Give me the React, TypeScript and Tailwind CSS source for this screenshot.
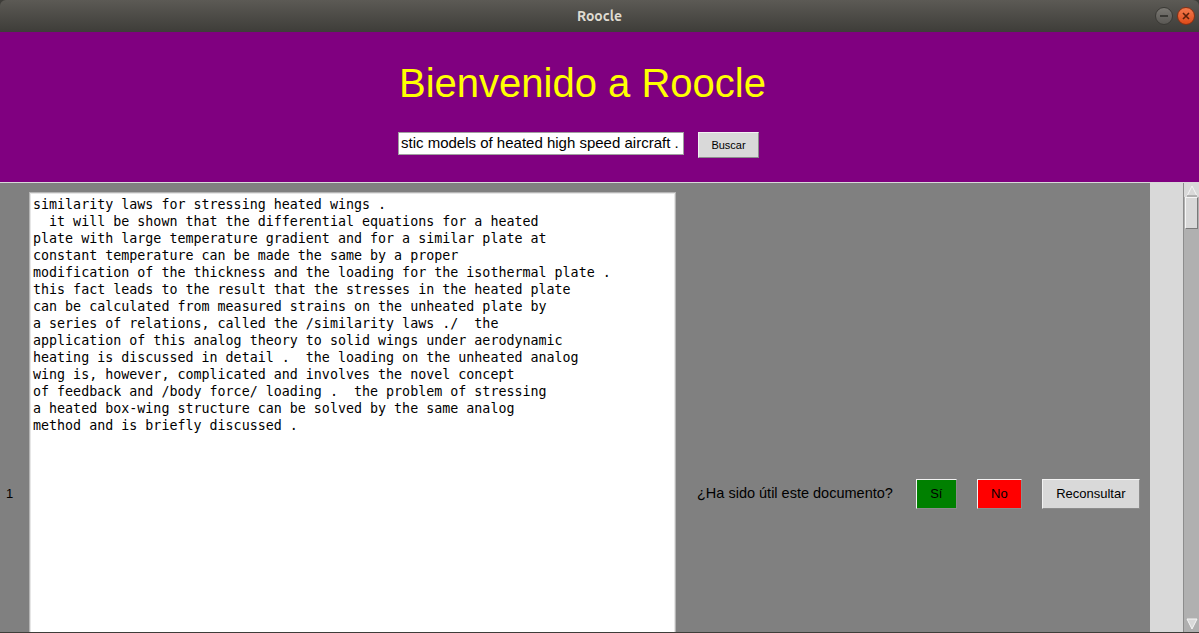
import React from 'react';

const DOC_LINES = [
  'similarity laws for stressing heated wings .',
  '  it will be shown that the differential equations for a heated',
  'plate with large temperature gradient and for a similar plate at',
  'constant temperature can be made the same by a proper',
  'modification of the thickness and the loading for the isothermal plate .',
  'this fact leads to the result that the stresses in the heated plate',
  'can be calculated from measured strains on the unheated plate by',
  'a series of relations, called the /similarity laws ./  the',
  'application of this analog theory to solid wings under aerodynamic',
  'heating is discussed in detail .  the loading on the unheated analog',
  'wing is, however, complicated and involves the novel concept',
  'of feedback and /body force/ loading .  the problem of stressing',
  'a heated box-wing structure can be solved by the same analog',
  'method and is briefly discussed .',
];

const sans = "font-['Liberation_Sans',Arial,sans-serif]";

function TitleBar() {
  return (
    <div className="relative flex h-[32px] items-center justify-center rounded-t-[6px] bg-gradient-to-b from-[#5c5a55] to-[#3e3d39]">
      <span className="mt-[1px] font-['Ubuntu','DejaVu_Sans',sans-serif] text-[14px] font-bold text-[#dfdbd2]">
        Roocle
      </span>
      <div className="absolute right-[4px] top-[7px] flex gap-[4px]">
        <div className="flex h-[18px] w-[18px] items-center justify-center rounded-full border border-[#3a3935] bg-gradient-to-b from-[#7a7873] to-[#5a5854]">
          <div className="h-[2px] w-[8px] bg-[#3a3935]" />
        </div>
        <div className="flex h-[18px] w-[18px] items-center justify-center rounded-full border border-[#8a2f12] bg-gradient-to-b from-[#f37a4c] to-[#df4a16]">
          <svg width="8" height="8" viewBox="0 0 8 8">
            <path d="M1 1 L7 7 M7 1 L1 7" stroke="#5a1f0a" strokeWidth="1.6" />
          </svg>
        </div>
      </div>
    </div>
  );
}

function TkButton({ label, className }: { label: string; className: string }) {
  return (
    <button
      className={`flex items-center justify-center border border-t-[#f2f2f2] border-l-[#f2f2f2] border-b-[#8c8c8c] border-r-[#8c8c8c] ${sans} ${className}`}
    >
      {label}
    </button>
  );
}

function Header() {
  return (
    <div className="flex h-[150px] flex-col items-center bg-[#800080]">
      <h1 className={`mr-[34px] mt-[28px] text-[40px] leading-[46px] text-[#ffff00] ${sans}`}>
        Bienvenido a Roocle
      </h1>
      <div className="ml-[-42px] mt-[26px] flex items-start gap-[14px]">
        <div className="flex h-[23px] w-[286px] items-center overflow-hidden border border-[#a0a0a0] bg-white pl-[2px]">
          <span className={`whitespace-nowrap text-[15px] text-black ${sans}`}>
            stic models of heated high speed aircraft .
          </span>
        </div>
        <TkButton
          label="Buscar"
          className="h-[26px] w-[61px] bg-[#d9d9d9] text-[11px] text-black"
        />
      </div>
    </div>
  );
}

function Scrollbar() {
  return (
    <div className="flex w-[16px] flex-col border-l border-[#8c8c8c] bg-[#b0b0b0]">
      <div className="flex h-[14px] items-end justify-center bg-[#d9d9d9]">
        <svg width="12" height="12" viewBox="0 0 12 12">
          <path d="M6 1 L11 11 L1 11 Z" fill="#d9d9d9" stroke="#f5f5f5" strokeWidth="1" />
          <path d="M11 11 L1 11" stroke="#7a7a7a" strokeWidth="1" />
        </svg>
      </div>
      <div className="mx-[1px] h-[32px] border border-t-[#f5f5f5] border-l-[#f5f5f5] border-b-[#7a7a7a] border-r-[#7a7a7a] bg-[#d9d9d9]" />
      <div className="flex-1" />
      <div className="flex h-[14px] items-start justify-center">
        <svg width="12" height="12" viewBox="0 0 12 12">
          <path d="M1 1 L11 1 L6 11 Z" fill="#d9d9d9" stroke="#f5f5f5" strokeWidth="1" />
        </svg>
      </div>
    </div>
  );
}

function Body() {
  return (
    <div className="flex h-[450px] overflow-hidden border-t border-[#d9d9d9] bg-[#808080]">
      <div className="flex h-[622px] flex-1 items-center">
        <div className={`w-[29px] pr-[10px] text-center text-[13px] text-black ${sans}`}>1</div>
        <div className="ml-[1px] mt-[10px] h-[600px] w-[645px] self-start border border-[#e6e6e6] bg-white outline outline-1 outline-[#b5b5b5]">
          <pre className="pl-[2px] pt-[2px] font-['DejaVu_Sans_Mono',monospace] text-[13.33px] leading-[17px] text-black">
            {DOC_LINES.join('\n')}
          </pre>
        </div>
        <div className="ml-[22px] flex items-center">
          <span className={`text-[14.5px] text-black ${sans}`}>¿Ha sido útil este documento?</span>
          <TkButton
            label="Sí"
            className="ml-[23px] h-[30px] w-[41px] bg-[#008000] text-[13px] text-black"
          />
          <TkButton
            label="No"
            className="ml-[20px] h-[30px] w-[45px] bg-[#ff0000] text-[13px] text-black"
          />
          <TkButton
            label="Reconsultar"
            className="ml-[20px] h-[30px] w-[98px] bg-[#d9d9d9] text-[13px] text-black"
          />
        </div>
        <div className="flex-1" />
        <div className="h-full w-[33px] self-stretch bg-[#d9d9d9]" />
      </div>
      <Scrollbar />
    </div>
  );
}

export default function App() {
  return (
    <div className="h-[633px] w-[1199px] overflow-hidden bg-[#3e3d39]">
      <TitleBar />
      <Header />
      <Body />
    </div>
  );
}
